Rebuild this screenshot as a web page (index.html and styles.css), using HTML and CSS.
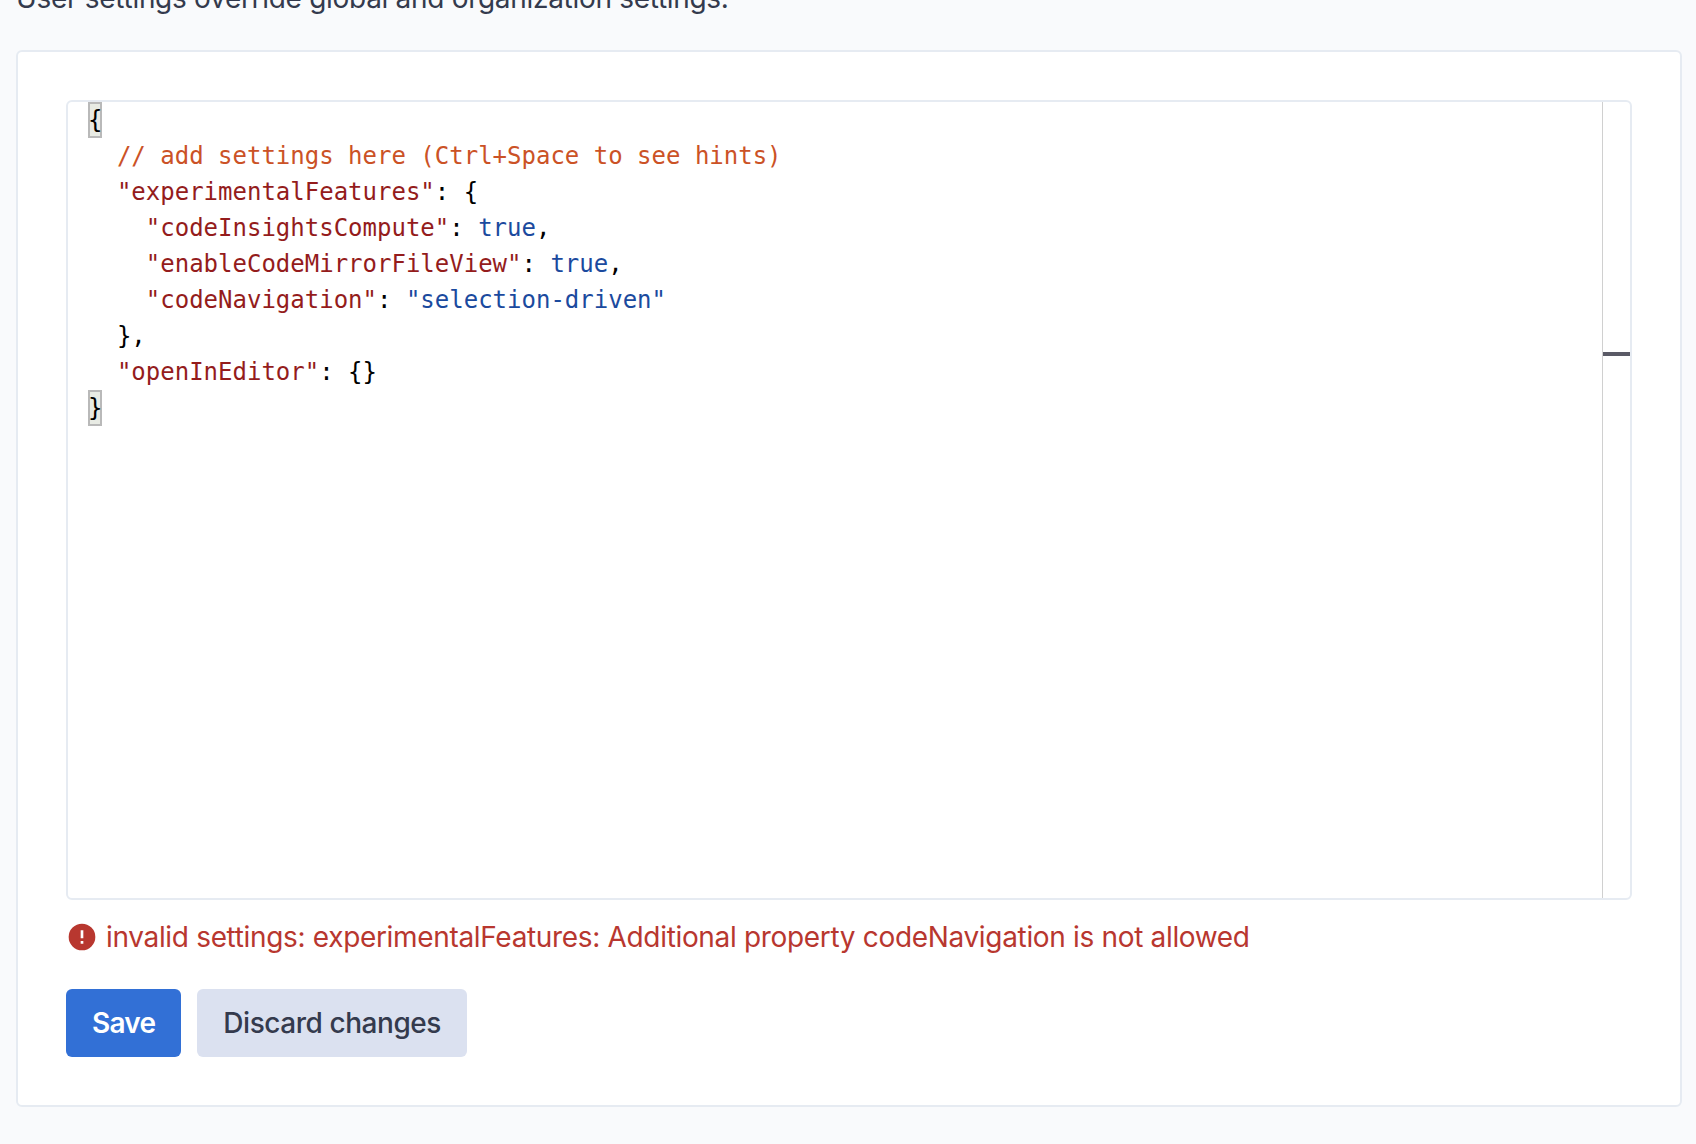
FILE: index.html
```html
<!DOCTYPE html>
<html lang="en">

<head>
    <meta charset="utf-8">
    <title>User settings</title>
    <link rel="stylesheet" href="styles.css">
</head>

<body>
    <p class="intro">User settings override global and organization settings.</p>

    <div class="card">
        <div class="editor">
            <!-- json lines -->
            <div class="code">
                <div class="line"><span class="match">{</span></div>
                <div class="line">  <span class="comment">// add settings here (Ctrl+Space to see hints)</span></div>
                <div class="line">  <span class="key">"experimentalFeatures"</span>: {</div>
                <div class="line">    <span class="key">"codeInsightsCompute"</span>: <span class="value">true</span>,</div>
                <div class="line">    <span class="key">"enableCodeMirrorFileView"</span>: <span class="value">true</span>,</div>
                <div class="line">    <span class="key">"codeNavigation"</span>: <span class="value">"selection-driven"</span></div>
                <div class="line">  },</div>
                <div class="line">  <span class="key">"openInEditor"</span>: {}</div>
                <div class="line"><span class="match">}</span></div>
            </div>
            <div class="ruler">
                <div class="ruler-mark"></div>
            </div>
        </div>

        <div class="error">
            <svg class="error-icon" viewBox="0 0 24 24" aria-hidden="true">
                <path d="M13,13H11V7H13M13,17H11V15H13M12,2A10,10 0 0,0 2,12A10,10 0 0,0 12,22A10,10 0 0,0 22,12A10,10 0 0,0 12,2Z" />
            </svg>
            <span>invalid settings: experimentalFeatures: Additional property codeNavigation is not allowed</span>
        </div>

        <div class="actions">
            <button class="btn btn-primary" type="button">Save</button>
            <button class="btn btn-secondary" type="button">Discard changes</button>
        </div>
    </div>
</body>

</html>
```

FILE: styles.css
```css
html {
    font-family: Inter, "Liberation Sans", sans-serif;
    color: #343a4d;
    background-color: #f9fafc;
}

body {
    margin: 0;
    padding: 0 14px 38px 16px;
}

.intro {
    margin: -23px 0 0;
    font-size: 28px;
    line-height: 42px;
    letter-spacing: -0.3px;
    height: 49px;
    padding-bottom: 24px;
}

.card {
    background-color: #fff;
    border: 2px solid #e6ebf2;
    border-radius: 6px;
    padding: 48px;
}

.editor {
    display: flex;
    height: 796px;
    border: 2px solid #e6ebf2;
    border-radius: 6px;
}

.code {
    flex: 1;
    padding-left: 20px;
    font-family: "DejaVu Sans Mono", monospace;
    font-size: 24px;
    line-height: 36px;
    color: #000;
}

.line {
    height: 36px;
    white-space: pre;
}

.match {
    display: inline-block;
    box-sizing: border-box;
    width: 14.45px;
    height: 36px;
    background-color: #e8ebe4;
    border: 2px solid #b9b9b9;
    vertical-align: top;
    text-indent: -2px;
    line-height: 32px;
}

.comment {
    color: #cb5226;
}

.key {
    color: #941c1c;
}

.value {
    color: #1b4a9e;
}

.ruler {
    width: 28px;
    border-left: 1px solid #d0d0d0;
    padding-top: 250px;
    box-sizing: border-box;
}

.ruler-mark {
    height: 4px;
    background-color: #5a5a66;
}

.error {
    display: flex;
    align-items: center;
    gap: 8px;
    margin-top: 16px;
    height: 42px;
    font-size: 28px;
    letter-spacing: -0.33px;
    color: #b8372f;
}

.error-icon {
    width: 32px;
    height: 32px;
    fill: #b8372f;
}

.actions {
    display: flex;
    gap: 16px;
    margin-top: 31px;
}

.btn {
    height: 68px;
    padding: 0 26px;
    border: 0;
    border-radius: 6px;
    font-family: inherit;
    font-size: 28px;
    font-weight: 500;
    letter-spacing: -0.45px;
}

.btn-primary {
    background-color: #3270d6;
    color: #fff;
    font-weight: 600;
    letter-spacing: -0.75px;
}

.btn-secondary {
    background-color: #dbe1f0;
    color: #343a4d;
}
```
